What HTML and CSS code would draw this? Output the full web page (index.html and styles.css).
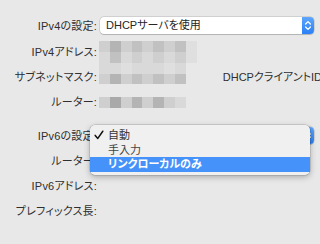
FILE: index.html
```html
<!DOCTYPE html>
<html lang="ja">
<head>
<meta charset="utf-8">
<link rel="stylesheet" href="styles.css">
</head>
<body>
<div class="form">
  <div class="row row-a">
    <div class="label">IPv4の設定:</div>
    <div class="select">
      <span class="select-text">DHCPサーバを使用</span>
      <span class="stepper">
        <svg width="12" height="17" viewBox="0 0 12 17"><path d="M3.6 7 L6 4.6 L8.4 7 M3.6 10 L6 12.4 L8.4 10" fill="none" stroke="#fff" stroke-width="1.3" stroke-linecap="round" stroke-linejoin="round"/></svg>
      </span>
    </div>
  </div>

  <div class="row row-b">
    <div class="label">IPv4アドレス:</div>
    <div class="blocks cols9">
      <i class="s3"></i><i class="s1"></i><i class="s3"></i><i class="s2"></i><i class="s3"></i><i class="s2"></i><i class="s3"></i><i class="s2"></i><i class="s5"></i>
      <i class="s4"></i><i class="s2"></i><i class="s4"></i><i class="s3"></i><i class="s4"></i><i class="s3"></i><i class="s4"></i><i class="s3"></i><i class="s5"></i>
    </div>
  </div>

  <div class="row row-c">
    <div class="label label-low">サブネットマスク:</div>
    <div class="value-c">
      <div class="blocks cols8">
        <i class="s4"></i><i class="s4"></i><i class="s5"></i><i class="s4"></i><i class="s4"></i><i class="s4"></i><i class="s5"></i><i class="s4"></i>
        <i class="s3"></i><i class="s1"></i><i class="s3"></i><i class="s2"></i><i class="s3"></i><i class="s2"></i><i class="s3"></i><i class="s2"></i>
      </div>
      <span class="client-id">DHCPクライアントID</span>
    </div>
  </div>

  <div class="row row-d">
    <div class="label">ルーター:</div>
    <div class="blocks cols8 single">
      <i class="s3"></i><i class="s0"></i><i class="s3"></i><i class="s1"></i><i class="s3"></i><i class="s1"></i><i class="s3"></i><i class="s4"></i>
    </div>
  </div>

  <div class="row row-e">
    <div class="label">IPv6の設定:</div>
    <div class="select">
      <span class="select-text"></span>
      <span class="stepper">
        <svg width="12" height="17" viewBox="0 0 12 17"><path d="M3.6 7 L6 4.6 L8.4 7 M3.6 10 L6 12.4 L8.4 10" fill="none" stroke="#fff" stroke-width="1.3" stroke-linecap="round" stroke-linejoin="round"/></svg>
      </span>
    </div>
  </div>

  <div class="row row-f">
    <div class="label">ルーター:</div>
    <div></div>
  </div>

  <div class="row row-f">
    <div class="label">IPv6アドレス:</div>
    <div></div>
  </div>

  <div class="row row-f">
    <div class="label">プレフィックス長:</div>
    <div></div>
  </div>
</div>

<div class="menu">
  <div class="item">
    <svg class="check" width="10" height="10" viewBox="0 0 10 10"><path d="M1.2 5.4 L3.8 8.4 L8.8 1.2" fill="none" stroke="#111" stroke-width="1.5" stroke-linecap="round" stroke-linejoin="round"/></svg>
    <span>自動</span>
  </div>
  <div class="item item-2"><span>手入力</span></div>
  <div class="item item-sel"><span>リンクローカルのみ</span></div>
</div>
</body>
</html>
```

FILE: styles.css
```css
html, body {
  margin: 0;
  padding: 0;
}
body {
  width: 320px;
  height: 244px;
  overflow: hidden;
  background: #e8e8e8;
  font-family: "Liberation Sans", "Noto Sans CJK JP", sans-serif;
  font-size: 11px;
  color: #2f2f2f;
  font-feature-settings: "palt" 1;
  position: relative;
}
.form {
  padding-top: 17px;
  display: flex;
  flex-direction: column;
}
.row {
  display: grid;
  grid-template-columns: 97px 1fr;
  column-gap: 2px;
  align-items: center;
}
.label {
  text-align: right;
  line-height: 14px;
  white-space: nowrap;
  letter-spacing: 0.2px;
}
.row-a { height: 17px; }
.row-b { height: 22px; margin-top: 7px; }
.row-c { height: 21px; align-items: stretch; }
.row-d { height: 11px; margin-top: 11px; }
.row-e { height: 17px; margin-top: 21px; }
.row-f { height: 17px; margin-top: 8px; }

.label-low {
  align-self: end;
}

.select {
  margin-left: 1px;
  width: 214px;
  height: 17px;
  box-sizing: border-box;
  background: #fff;
  border-radius: 4px;
  box-shadow: 0 0 0 0.5px rgba(0,0,0,0.18), 0 0.5px 1px rgba(0,0,0,0.15);
  display: flex;
  align-items: center;
  justify-content: space-between;
}
.select-text {
  padding-left: 6px;
  line-height: 17px;
  color: #262626;
}
.stepper {
  width: 12px;
  height: 17px;
  border-radius: 0 4px 4px 0;
  background: linear-gradient(#5ea6fc, #2b80f6);
  display: flex;
}

.blocks {
  display: grid;
  grid-auto-rows: 11px;
}
.cols9 { grid-template-columns: repeat(9, 10.85px); }
.cols8 { grid-template-columns: repeat(8, 10.85px); }
.blocks i { display: block; }
.row-c .blocks { grid-auto-rows: 10.5px; }
.s0 { background: #a9a9a9; }
.s1 { background: #b4b4b4; }
.s2 { background: #c1c1c1; }
.s3 { background: #cfcfcf; }
.s4 { background: #d9d9d9; }
.s5 { background: #dfdfdf; }

.value-c {
  display: flex;
  align-items: flex-end;
}
.client-id {
  margin-left: 37px;
  line-height: 14px;
  white-space: nowrap;
}

.menu {
  position: absolute;
  left: 90px;
  top: 125px;
  width: 220px;
  height: 50px;
  box-sizing: border-box;
  padding-top: 3px;
  background: #f0f0f0;
  border-radius: 5px;
  box-shadow: 0 0 0 0.5px rgba(0,0,0,0.2), 0 2px 6px rgba(0,0,0,0.28);
  display: flex;
  flex-direction: column;
}
.item {
  height: 15px;
  line-height: 15px;
  padding-left: 18px;
  position: relative;
  color: #333;
}
.item-2 { height: 14px; line-height: 14px; color: #444; }
.check {
  position: absolute;
  left: 4px;
  top: 2px;
}
.item-sel {
  background: #4592fa;
  color: #fff;
  font-weight: 700;
}
```
